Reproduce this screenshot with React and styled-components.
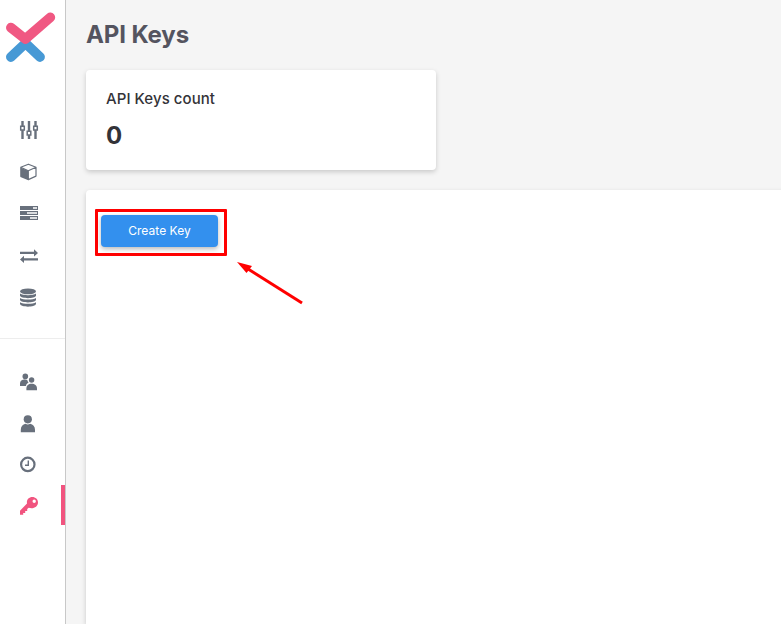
import React from "react";
import styled, { createGlobalStyle } from "styled-components";

const GlobalStyle = createGlobalStyle`
  * { box-sizing: border-box; }
  body { margin: 0; overflow: hidden; background: #f5f5f5; font-family: Inter, sans-serif; }
`;

const Page = styled.div`
  display: flex;
  height: 100vh;
  overflow: hidden;
`;

const Sidebar = styled.aside`
  flex: 0 0 66px;
  background: #fff;
  border-right: 1px solid #c8c8c8;
`;

const Logo = styled.svg`
  display: block;
  width: 65px;
  height: 75px;
  margin-bottom: 35px;
`;

const Nav = styled.nav`
  display: flex;
  flex-direction: column;
  gap: ${(p) => p.$gap}px;
`;

const NavItem = styled.a`
  display: flex;
  align-items: center;
  height: 40px;
  padding-left: 19px;
  color: ${(p) => (p.$active ? "#f1547f" : "#68707c")};
  border-right: 4px solid ${(p) => (p.$active ? "#f1547f" : "transparent")};
`;

const Icon = styled.svg`
  width: 20px;
  height: 20px;
  fill: currentColor;
  overflow: visible;
`;

const Divider = styled.hr`
  height: 1px;
  margin: 20px 0 23px;
  border: 0;
  background: #ededed;
`;

const Main = styled.main`
  flex: 1;
  display: flex;
  flex-direction: column;
  min-width: 0;
  padding-left: 20px;
`;

const Title = styled.h1`
  margin: 20px 0 20px;
  height: 30px;
  font-size: 24px;
  line-height: 30px;
  font-weight: 700;
  letter-spacing: -0.12px;
  color: #54545f;
`;

const Card = styled.section`
  background: #fff;
  border-radius: 4px;
  box-shadow: 0 2px 5px rgba(0, 0, 0, 0.18);
`;

const CountCard = styled(Card)`
  width: 350px;
  height: 100px;
  padding: 19px 20px;
  margin-bottom: 20px;
  color: #333338;
`;

const CountLabel = styled.div`
  font-size: 15px;
  line-height: 20px;
  font-weight: 500;
  letter-spacing: 0.06px;
`;

const CountValue = styled.div`
  margin-top: 11px;
  font-size: 24px;
  line-height: 32px;
  font-weight: 700;
`;

const KeysCard = styled(Card)`
  flex: 1;
  margin-right: -10px;
  padding: 19px 9px;
  border-radius: 4px 0 0 0;
`;

const Highlight = styled.div`
  position: relative;
  width: 132px;
  height: 47px;
  padding: 3px;
  border: 3px solid #ff0000;
  border-radius: 1px;
`;

const CreateButton = styled.button`
  display: block;
  width: 117px;
  height: 32px;
  padding: 0;
  border: 0;
  border-radius: 4px;
  background: #3390ee;
  color: #fff;
  font: 400 12px/32px Inter, sans-serif;
  letter-spacing: 0.05px;
  box-shadow: 0 2px 5px rgba(0, 0, 0, 0.28);
`;

const Arrow = styled.svg`
  position: absolute;
  left: 137px;
  top: 48px;
  width: 70px;
  height: 46px;
`;

const icons = {
  sliders: (
    <g fill="none" stroke="currentColor">
      <path strokeWidth="2.4" d="M3.5 1v5.5M3.5 10v9M10 1v10M10 15v4M16.5 1v5.5M16.5 10v9" />
      <path strokeWidth="1.5" d="M1.7 6.2h3.6v3.7H1.7zM8.2 11.2h3.6v3.7H8.2zM14.7 6.2h3.6v3.7h-3.6z" />
    </g>
  ),
  cube: (
    <>
      <path d="M1.2 5.4 9.3 8.7v9.5L2 15.2a1.2 1.2 0 0 1-.8-1z" />
      <path
        fill="none"
        stroke="currentColor"
        strokeWidth="1.2"
        strokeLinejoin="round"
        d="M1.7 5.3 9.4 2.2l7.6 3.1v8.8l-7.7 3.5V8.7zM9.3 8.7 17 5.3"
      />
    </>
  ),
  server: (
    <>
      <path d="M1 2h18v4H1zM1 7h18v4H1zM1 12h18v4H1z" />
      <path fill="#fff" d="M14 3.2h4v1.5h-4zM8 8.2h10v1.5H8zM11 13.2h7v1.5h-7z" />
    </>
  ),
  transfer: (
    <path d="M1 5.7h14V3.2L19 7l-4 3.6V8H1zM19 12.2H5V9.7L1 13.4l4 3.6v-2.5h14z" />
  ),
  database: (
    <>
      <ellipse cx="9" cy="3.4" rx="8" ry="2.9" />
      <path d="M1 5.6c3 2.2 13 2.2 16 0v2.2c-1 3.1-15 3.1-16 0zM1 9.9c3 2.2 13 2.2 16 0v2.2c-1 3.1-15 3.1-16 0zM1 14.2c3 2.2 13 2.2 16 0V16c-1 3.5-15 3.5-16 0z" />
    </>
  ),
  team: (
    <>
      <circle cx="6.3" cy="4.4" r="2.8" />
      <path d="M1 14v-2.5C1 9 3 7.6 5.7 7.6c1 0 2 .2 2.7.6.1 1 .5 1.7 1.2 2.3C8 11.3 7.2 12.3 7 14z" />
      <circle cx="12.6" cy="8" r="2.7" />
      <path d="M7.4 18.2v-1.6c0-3 2-4.9 5.2-4.9s5.4 1.9 5.4 4.9v1.6z" />
    </>
  ),
  user: (
    <>
      <circle cx="8.8" cy="6.3" r="4.1" />
      <path d="M1.8 19.2v-2.5c0-3.3 2-5.4 4.7-5.9 1.4.9 3.2.9 4.6 0 2.9.5 4.9 2.6 4.9 5.9v2.5z" />
    </>
  ),
  clock: (
    <>
      <circle cx="8.8" cy="10.4" r="6.7" fill="none" stroke="currentColor" strokeWidth="2.2" />
      <path d="M9.3 6.5v4.7H6" fill="none" stroke="currentColor" strokeWidth="1.4" />
    </>
  ),
  key: (
    <path
      fillRule="evenodd"
      d="M13.3 2C9.7 2 7.3 5 8 8.5L1 15.7v4.1h3.2v-1.9h2v-2h2v-2l1.5-1.2c4.6 1.6 9.3-1 9.3-5.3C19 4.3 16.5 2 13.3 2zm1.9 2.5a1.7 1.7 0 1 1 0 3.4 1.7 1.7 0 0 1 0-3.4z"
    />
  ),
};

function NavGroup({ names, gap, active }) {
  return (
    <Nav $gap={gap}>
      {names.map((name) => (
        <NavItem key={name} $active={name === active} aria-label={name}>
          <Icon viewBox="0 0 20 20">{icons[name]}</Icon>
        </NavItem>
      ))}
    </Nav>
  );
}

export default function App() {
  return (
    <>
      <GlobalStyle />
      <Page>
        <Sidebar>
          <Logo viewBox="0 0 65 75" fill="none" strokeWidth="9.8" strokeLinecap="round" strokeLinejoin="round">
            <path stroke="#4799d5" d="M10.9 57 25.5 43.3 40 57" />
            <path stroke="#f05882" d="M10.9 27.7 25.3 39 50.3 17.4" />
          </Logo>
          <NavGroup gap={2} names={["sliders", "cube", "server", "transfer", "database"]} />
          <Divider />
          <NavGroup gap={1} names={["team", "user", "clock", "key"]} active="key" />
        </Sidebar>
        <Main>
          <Title>API Keys</Title>
          <CountCard>
            <CountLabel>API Keys count</CountLabel>
            <CountValue>0</CountValue>
          </CountCard>
          <KeysCard>
            <Highlight>
              <CreateButton>Create Key</CreateButton>
              <Arrow viewBox="0 0 70 46">
                <path d="M10 7 67 43" stroke="#ff0000" strokeWidth="3" />
                <path d="M2 2 17 6 11.5 13z" fill="#ff0000" />
              </Arrow>
            </Highlight>
          </KeysCard>
        </Main>
      </Page>
    </>
  );
}
